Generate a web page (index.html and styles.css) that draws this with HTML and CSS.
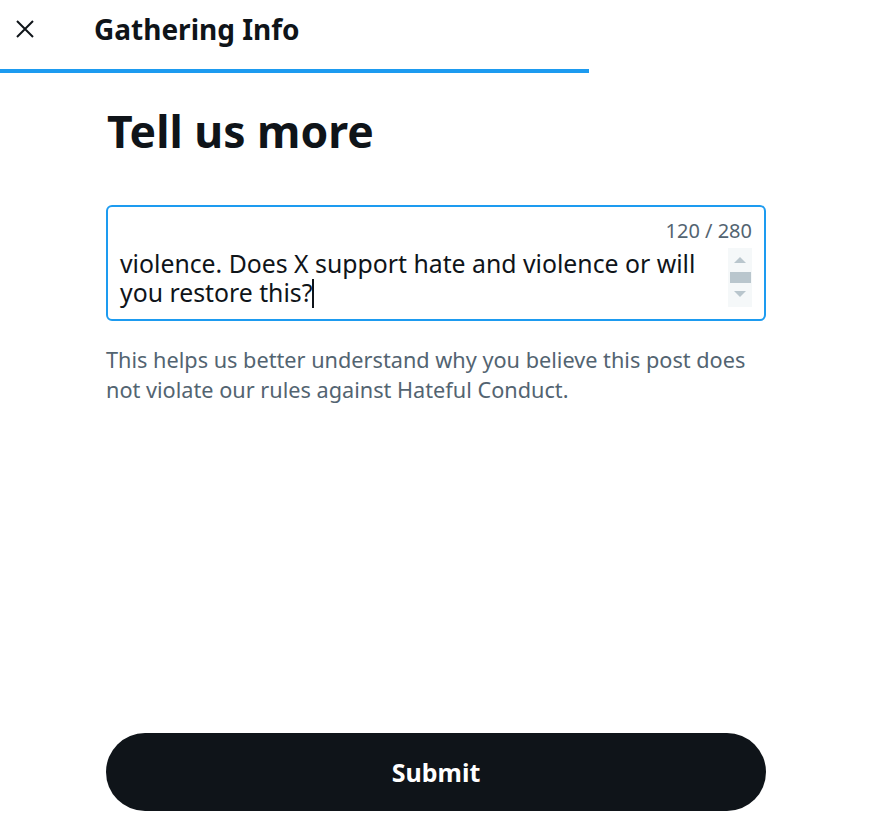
FILE: index.html
```html
<!DOCTYPE html>
<html lang="en">
     <head>
          <meta charset="UTF-8">
          <meta name="viewport" content="width=device-width, initial-scale=1.0">
          <title>Gathering Info</title>
          <link rel="stylesheet" href="styles.css">
     </head>
     <body>
          <div class="header">
               <button class="close-btn" aria-label="Close">
                    <svg viewBox="0 0 24 24" width="24" height="24"><path d="M4 4 L20 20 M20 4 L4 20" stroke="#0f1419" stroke-width="2" fill="none"/></svg>
               </button>
               <h2>Gathering Info</h2>
          </div>
          <div class="progress"><div class="progress-fill" style="width: 589px"></div></div>
          <div class="content">
               <h1>Tell us more</h1>
               <div class="field">
                    <div class="counter">120 / 280</div>
                    <div class="field-body">
                         <div class="field-text">violence. Does X support hate and violence or will you restore this?<span class="caret"></span></div>
                         <div class="scrollbar">
                              <span class="arrow-up"></span>
                              <span class="thumb"></span>
                              <span class="arrow-down"></span>
                         </div>
                    </div>
               </div>
               <p class="hint">This helps us better understand why you believe this post does not violate our rules against Hateful Conduct.</p>
          </div>
          <div class="footer">
               <button class="submit-btn">Submit</button>
          </div>
     </body>
</html>
```

FILE: styles.css
```css
body {
     font-family: "Noto Sans", "Open Sans", sans-serif;
     margin: 0;
     padding: 0;
     background-color: #fff;
     color: #0f1419;
     width: 870px;
     height: 829px;
     display: flex;
     flex-direction: column;
}
.header {
     height: 58px;
     display: flex;
     align-items: center;
}
.close-btn {
     border: none;
     background: none;
     padding: 0;
     margin-left: 13px;
     width: 24px;
     height: 24px;
     display: flex;
}
.close-btn svg {
     width: 24px;
     height: 24px;
}
.header h2 {
     margin: 0 0 0 57px;
     font-size: 28px;
     font-weight: 700;
}
.progress {
     margin-top: 11px;
     height: 4px;
}
.progress-fill {
     height: 4px;
     background-color: #1d9bf0;
}
.content {
     padding: 0 104px 0 106px;
}
h1 {
     margin: 28px 0 0 1px;
     font-size: 44.5px;
     font-weight: 700;
     line-height: 60px;
}
.field {
     margin-top: 44px;
     border: 2px solid #1d9bf0;
     border-radius: 6px;
     padding: 10px 12px 0 12px;
     height: 102px;
}
.counter {
     text-align: right;
     color: #536471;
     font-size: 20px;
     line-height: 28px;
}
.field-body {
     display: flex;
     gap: 14px;
     margin-top: 4px;
}
.field-text {
     flex: 1;
     font-size: 24.8px;
     line-height: 29px;
     color: #0f1419;
}
.caret {
     display: inline-block;
     width: 2px;
     height: 29px;
     background-color: #0f1419;
     vertical-align: -6px;
}
.scrollbar {
     width: 24px;
     height: 59px;
     margin-top: -1px;
     background-color: #f5f8f9;
     display: flex;
     flex-direction: column;
     align-items: center;
     justify-content: space-between;
     padding: 9px 0 10px;
     box-sizing: border-box;
}
.arrow-up,
.arrow-down {
     width: 0;
     height: 0;
     border-left: 6px solid transparent;
     border-right: 6px solid transparent;
}
.arrow-up {
     border-bottom: 6px solid #b9c6cd;
}
.arrow-down {
     border-top: 6px solid #b9c6cd;
}
.thumb {
     width: 21px;
     height: 11px;
     background-color: #b9c6cd;
}
.hint {
     margin: 24px 0 0 0;
     font-size: 21.7px;
     line-height: 30px;
     color: #536471;
}
.footer {
     margin-top: auto;
     padding: 0 104px 18px 106px;
}
.submit-btn {
     width: 100%;
     height: 78px;
     border: none;
     border-radius: 39px;
     background-color: #0f1419;
     color: #fff;
     font-family: "Noto Sans", sans-serif;
     font-size: 25px;
     font-weight: 700;
}
```
